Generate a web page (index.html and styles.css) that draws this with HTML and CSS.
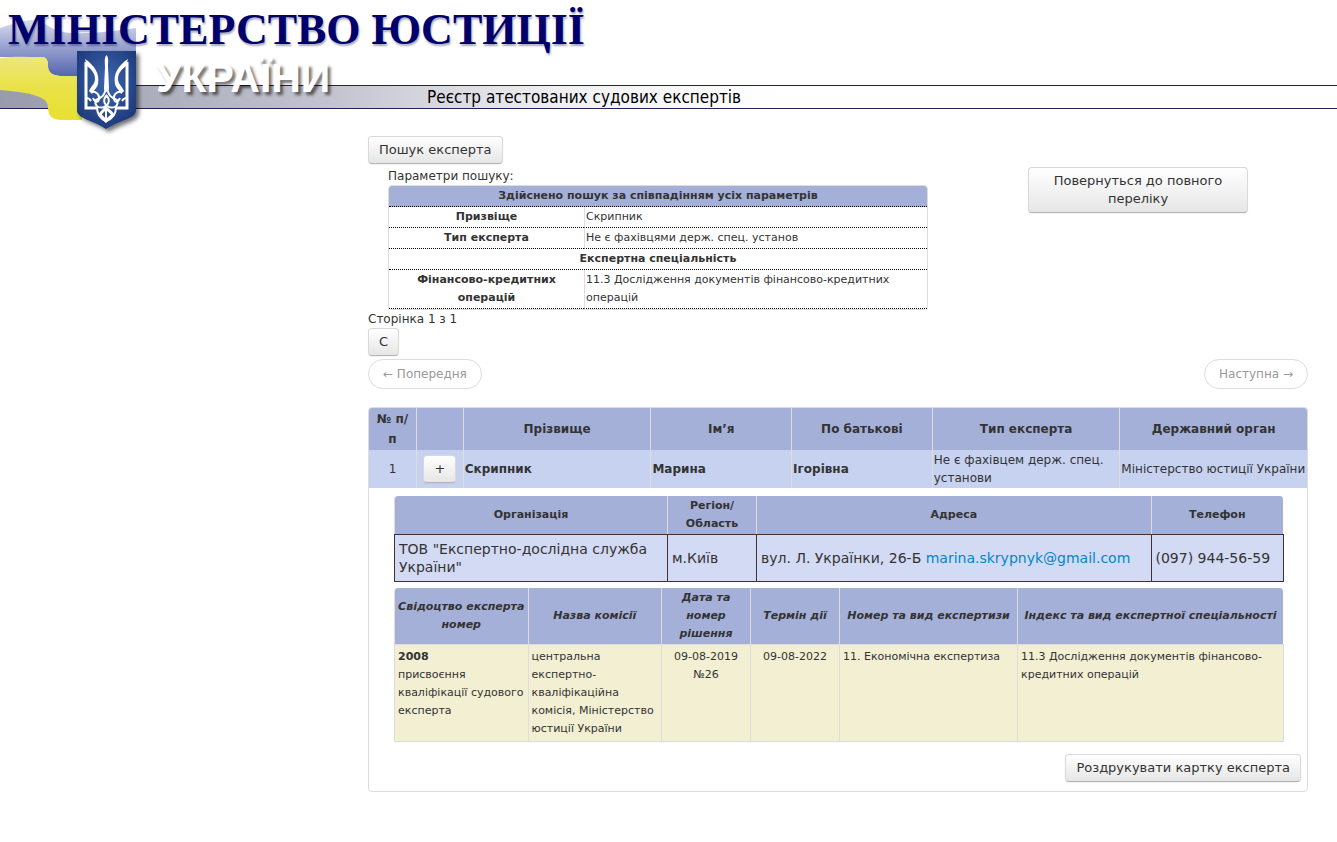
FILE: index.html
```html
<!DOCTYPE html>
<html lang="uk">
<head>
<meta charset="utf-8">
<title>Реєстр атестованих судових експертів</title>
<link rel="stylesheet" href="styles.css">
</head>
<body>
<header class="banner">
  <div class="strip"><p class="strip-title">Реєстр атестованих судових експертів</p></div>
  <svg class="flag" width="160" height="140" viewBox="0 0 160 140" aria-hidden="true">
    <defs>
      <linearGradient id="blue" x1="0" y1="0" x2="0" y2="1">
        <stop offset="0" stop-color="#d9ddee"/>
        <stop offset=".3" stop-color="#b0b8da"/>
        <stop offset="1" stop-color="#5565b0"/>
      </linearGradient>
      <linearGradient id="yellow" x1="0" y1="0" x2="0" y2="1">
        <stop offset="0" stop-color="#ece77c"/>
        <stop offset=".5" stop-color="#e9e247"/>
        <stop offset="1" stop-color="#e8e032"/>
      </linearGradient>
      <radialGradient id="shield" cx=".5" cy=".4" r=".65">
        <stop offset="0" stop-color="#3e68b0"/>
        <stop offset="1" stop-color="#1c3778"/>
      </radialGradient>
      <filter id="shade" x="-20%" y="-20%" width="150%" height="150%">
        <feDropShadow dx="3" dy="3" stdDeviation="2" flood-color="#000" flood-opacity=".55"/>
      </filter>
    </defs>
    <path fill="url(#blue)" d="M0 28C12 24 22 20 34 20C48 22 50 32 72 33C95 34 112 31 136 28V76H60C50 75 48 72 48 66C48 60 46 57 40 57H0Z"/>
    <path fill="url(#yellow)" d="M0 58C14 56 28 57 43 57C48 58 48 62 48 67C49 74 55 76 63 76H82V120H62C51 120 48 115 48 107C48 97 34 93 0 90Z"/>
    <path filter="url(#shade)" fill="url(#shield)" d="M77 51H136V111C135 119 120 120 106 129C93 120 78 119 77 111Z"/>
    <g fill="none" stroke="#fff" stroke-width="3" stroke-linejoin="miter">
      <path d="M86 62V108H97"/>
      <path d="M127 62V108H116"/>
      <path d="M106 108C98 116 99 113 106 121C114 113 115 116 106 108Z"/>
      <path stroke-width="2" d="M92 92C96 91 100 95 99 99C98 104 94 101 93 98M121 92C117 91 113 95 114 99C115 104 119 101 120 98"/>
      <path stroke-width="2" d="M106 87C105 96 101 98 96 100C94 105 98 109 104 107C110 104 110 99 106 95M107 87C108 96 112 98 117 100C119 105 115 109 109 107C103 104 103 99 107 95"/>
      <path stroke-width="2" d="M97 107C97 114 101 119 106 121C112 119 116 114 116 107M106 107V121M86 98C88 98 90 99 91 101M127 98C125 98 123 99 122 101"/>
    </g>
    <g fill="#fff">
      <path d="M85 59C94 65 100 73 98 84C97 89 93 90 92 94L89 91C91 86 95 84 95 79C95 73 91 69 87 66Z"/>
      <path d="M128 59C119 65 113 73 115 84C116 89 120 90 121 94L124 91C122 86 118 84 118 79C118 73 122 69 126 66Z"/>
      <path d="M106.500 55C109 58 108 62 108 67L109 88C109 93 104 93 104 88L105 67C105 62 104 58 106.500 55Z"/>
    </g>
  </svg>
  <h1 class="brand"><span class="ministry">МІНІСТЕРСТВО ЮСТИЦІЇ</span> <span class="country">УКРАЇНИ</span></h1>
</header>

<main class="content">
  <button class="btn" type="button">Пошук експерта</button>
  <section class="search">
    <div class="params">
      <div>Параметри пошуку:</div>
      <table class="criteria">
        <colgroup><col class="w-name"><col></colgroup>
        <thead><tr><th colspan="2">Здійснено пошук за співпадінням усіх параметрів</th></tr></thead>
        <tbody>
          <tr><th scope="row">Призвіще</th><td>Скрипник</td></tr>
          <tr><th scope="row">Тип експерта</th><td>Не є фахівцями держ. спец. установ</td></tr>
          <tr><th colspan="2">Експертна спеціальність</th></tr>
          <tr><th scope="row">Фінансово-кредитних операцій</th><td>11.3 Дослідження документів фінансово-кредитних операцій</td></tr>
        </tbody>
      </table>
    </div>
    <button class="btn btn-back" type="button">Повернуться до повного переліку</button>
  </section>

  <div class="page-info">Сторінка 1 з 1</div>
  <button class="btn" type="button">С</button>
  <nav class="pager"><a href="#">← Попередня</a><a href="#">Наступна →</a></nav>

  <table class="experts">
    <colgroup><col class="w5"><col class="w5"><col class="w20"><col class="w15"><col class="w15"><col class="w20"><col class="w20"></colgroup>
    <thead>
      <tr><th>№ п/<br>п</th><th></th><th>Прізвище</th><th>Ім’я</th><th>По батькові</th><th>Тип експерта</th><th>Державний орган</th></tr>
    </thead>
    <tbody>
      <tr class="person">
        <td class="center">1</td>
        <td class="center"><button class="btn" type="button">+</button></td>
        <td><b>Скрипник</b></td><td><b>Марина</b></td><td><b>Ігорівна</b></td>
        <td>Не є фахівцем держ. спец. установи</td><td>Міністерство юстиції України</td>
      </tr>
      <tr>
        <td class="card" colspan="7">
          <div class="card-tables">
            <table class="sub contacts">
              <colgroup><col class="w-org"><col class="w10"><col><col class="w15"></colgroup>
              <thead><tr><th>Організація</th><th>Регіон/<br>Область</th><th>Адреса</th><th>Телефон</th></tr></thead>
              <tbody><tr><td>ТОВ "Експертно-дослідна служба України"</td><td>м.Київ</td><td>вул. Л. Українки, 26-Б <a href="#">marina.skrypnyk@gmail.com</a></td><td>(097) 944-56-59</td></tr></tbody>
            </table>
            <table class="sub certs">
              <colgroup><col class="w15"><col class="w15"><col class="w10"><col class="w10"><col class="w20"><col class="w30"></colgroup>
              <thead><tr><th>Свідоцтво експерта номер</th><th>Назва комісії</th><th>Дата та номер рішення</th><th>Термін дії</th><th>Номер та вид експертизи</th><th>Індекс та вид експертної спеціальності</th></tr></thead>
              <tbody><tr>
                <td><b>2008</b><br>присвоєння кваліфікації судового експерта</td>
                <td>центральна експертно-кваліфікаційна комісія, Міністерство юстиції України</td>
                <td class="center">09-08-2019 №26</td><td class="center">09-08-2022</td>
                <td>11. Економічна експертиза</td>
                <td>11.3 Дослідження документів фінансово-кредитних операцій</td>
              </tr></tbody>
            </table>
          </div>
          <div class="card-actions"><button class="btn" type="button">Роздрукувати картку експерта</button></div>
        </td>
      </tr>
    </tbody>
  </table>
</main>
</body>
</html>
```

FILE: styles.css
```css
* { box-sizing: border-box; }
body {
  margin: 0;
  background: #fff;
  color: #333;
  font: 12px/18px Verdana, "DejaVu Sans", sans-serif;
}
a { color: #08c; text-decoration: none; }

/* Banner */
.banner { position: relative; padding: 85px 0 27px; }
.strip {
  height: 24px;
  border-top: 1px solid #23234d;
  border-bottom: 1px solid #23234d;
  background: linear-gradient(90deg, #989baa 0, #c4c5d0 340px, #f0f0f3 560px, #fff 780px);
}
.strip-title {
  margin: 0;
  padding-left: 427px;
  color: #000;
  font: 17px/22px Tahoma, "DejaVu Sans Condensed", "Noto Sans", sans-serif;
}
.flag { position: absolute; left: 0; top: 0; }
.brand { position: absolute; left: 8px; top: 4px; margin: 0; white-space: nowrap; }
.ministry {
  display: block;
  color: #00006c;
  font: bold 44px/52px "Liberation Serif", "Times New Roman", serif;
  text-shadow: 1px 2px 2px rgba(0, 0, 60, .35);
}
.country {
  display: block;
  padding-left: 148px;
  color: #fff;
  font: bold 41px/44px "Liberation Sans", Arial, sans-serif;
  text-shadow: 3px 3px 3px rgba(0, 0, 0, .55);
}

/* Buttons */
.btn {
  display: inline-block;
  vertical-align: middle;
  padding: 4px 10px;
  border: 1px solid #ccc;
  border-color: #d9d9d9 #d9d9d9 #b3b3b3;
  border-radius: 4px;
  background: linear-gradient(#fff, #e6e6e6);
  box-shadow: inset 0 1px 0 rgba(255, 255, 255, .2), 0 1px 2px rgba(0, 0, 0, .05);
  color: #333;
  font: 13px/18px Verdana, "DejaVu Sans", sans-serif;
  text-align: center;
}

.content { padding: 0 29px 32px 368px; }
.content > .btn { display: block; }

table { width: 100%; table-layout: fixed; border-collapse: separate; border-spacing: 0; }
th, td { padding: 1px; text-align: left; }
th { text-align: center; }
.center { text-align: center; }
.w5 { width: 5%; }
.w10 { width: 10%; }
.w15 { width: 15%; }
.w20 { width: 20%; }
.w30 { width: 30%; }
.w-org { width: 273px; }
.w-name { width: 195px; }

/* Search parameters */
.search { display: flex; align-items: flex-start; gap: 100px; padding: 3px 60px 0 20px; }
.params { flex: 1; }
.criteria { border: 1px solid #ddd; border-radius: 4px; font-size: 11px; }
.criteria th, .criteria td { border-bottom: 1px dotted #000; vertical-align: top; }
.criteria td { border-left: 1px solid #ddd; }
.criteria thead th { background: #a5b0d9; border-radius: 3px 3px 0 0; }
.btn-back { width: 220px; }

.pager { display: flex; justify-content: space-between; margin: 3px 0 18px; }
.pager a {
  padding: 5px 14px;
  border: 1px solid #ddd;
  border-radius: 15px;
  color: #999;
}

/* Experts */
.experts { border: 1px solid #ddd; border-radius: 4px; }
.experts > thead th { background: #a5b0d9; line-height: 20px; }
.experts > thead th + th, .person td + td { border-left: 1px solid #ddd; }
.experts > thead th:first-child { border-top-left-radius: 3px; }
.experts > thead th:last-child { border-top-right-radius: 3px; }
.person td { background: #c7d2f0; }

.card { padding: 8px 6px 9px; }
.card-tables { display: grid; gap: 6px; margin: 0 17px 12px 19px; }
.card-actions { text-align: right; }

.sub { font-size: 11px; }
.sub thead th { background: #a5b0d9; border-left: 1px solid #ddd; }
.sub thead th:first-child { border-top-left-radius: 4px; }
.sub thead th:last-child { border-right: 1px solid #fff; border-top-right-radius: 4px; }
.sub td { border: 1px solid #ddd; border-right-width: 0; }
.sub td:last-child { border-right-width: 1px; }
.contacts td {
  padding: 5px 4px;
  border-color: #3f3038;
  background: #d3daf4;
  font-size: 14px;
}
.certs th { font-style: italic; }
.certs td { padding: 3px; background: #f2efd3; vertical-align: top; }
```
